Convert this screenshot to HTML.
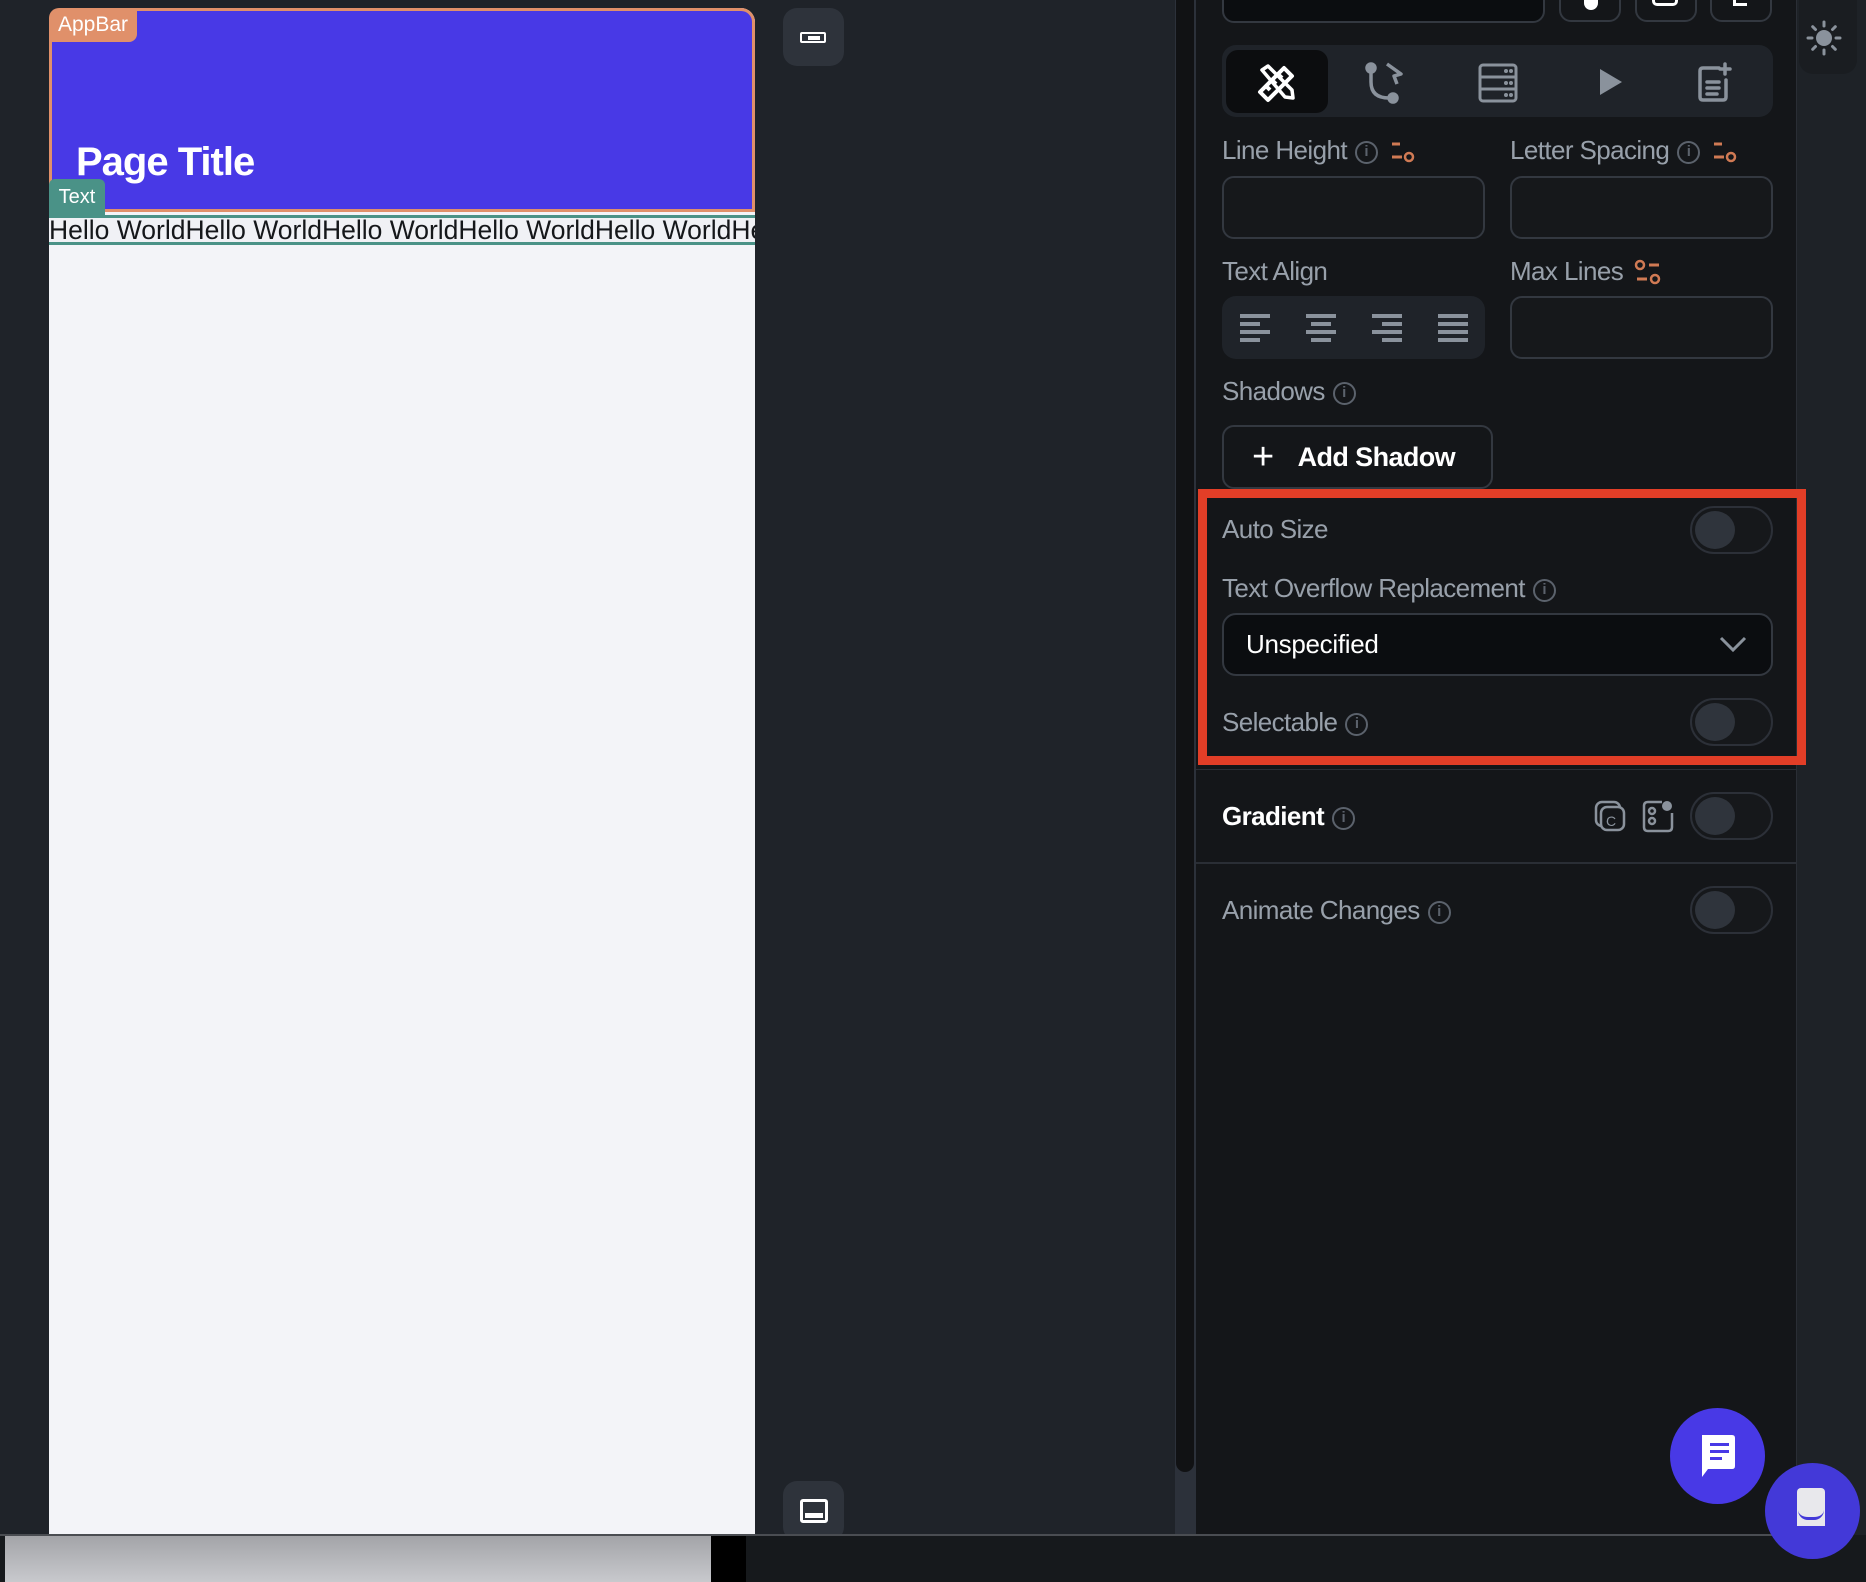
<!DOCTYPE html>
<html><head><meta charset="utf-8"><style>
*{box-sizing:border-box;margin:0;padding:0}
body{width:1866px;height:1582px;background:#1f2329;position:relative;overflow:hidden;font-family:"Liberation Sans",sans-serif}
.a{position:absolute}
.lbl{position:absolute;color:#98a0aa;font-size:26px;letter-spacing:-0.6px}
.inp{position:absolute;border:2px solid #333840;border-radius:12px;background:#16181b}
.tog{position:absolute;width:83px;height:48px;border:2px solid #2c3038;border-radius:24px;background:#16181b}
.tog:after{content:"";position:absolute;left:3px;top:3px;width:40px;height:38px;border-radius:50%;background:#2f343c}
.info{display:inline-block;width:23px;height:23px;border:2.5px solid #5b626c;border-radius:50%;color:#5b626c;font-size:15px;line-height:18px;text-align:center;font-weight:bold;vertical-align:middle;margin-left:8px;letter-spacing:0}
.sl{display:inline-block;vertical-align:middle;margin-left:10px}
</style></head><body>
<div class="a" style="left:49px;top:8px;width:706px;height:1527px;background:#f3f4f8;border-radius:14px 14px 0 0"></div>
<div class="a" style="left:49px;top:8px;width:706px;height:204px;background:#4839e6;border:3px solid #e0906a;border-radius:14px 14px 0 0"></div>
<div class="a" style="left:49px;top:8px;width:88px;height:34px;background:#e0906a;border-radius:10px 0 8px 0;color:#fff;font-size:21px;line-height:34px;text-align:center">AppBar</div>
<div class="a" style="left:76px;top:140px;color:#fff;font-size:40px;font-weight:bold;letter-spacing:-1px">Page Title</div>
<div class="a" style="left:49px;top:179px;width:56px;height:36px;background:#4a9287;border-radius:6px 6px 0 0;color:#fff;font-size:20px;line-height:36px;text-align:center">Text</div>
<div class="a" style="left:49px;top:215px;width:706px;height:30px;border-top:3px solid #4a9287;border-bottom:3px solid #4a9287;background:#f0f1f5;overflow:hidden;white-space:nowrap;color:#15171a;font-size:26.5px;line-height:24px">Hello WorldHello WorldHello WorldHello WorldHello WorldHello World</div>
<div class="a" style="left:783px;top:8px;width:61px;height:58px;background:#2e333b;border-radius:14px"></div>
<div class="a" style="left:800px;top:32px;width:26px;height:11px;border:2px solid #fff;border-radius:2px"><div class="a" style="left:6px;top:2px;width:12px;height:4px;background:#fff"></div></div>
<div class="a" style="left:783px;top:1481px;width:61px;height:60px;background:#2e333b;border-radius:14px"></div>
<div class="a" style="left:800px;top:1499px;width:28px;height:24px;border:3px solid #fff;border-radius:3px"><div class="a" style="left:2px;bottom:2px;width:18px;height:5px;background:#fff"></div></div>
<div class="a" style="left:1175px;top:0;width:21px;height:1535px;background:#2c313a"></div>
<div class="a" style="left:1176px;top:0;width:18px;height:1472px;background:#111214;border-radius:0 0 9px 9px"></div>
<div class="a" style="left:1196px;top:0;width:601px;height:1535px;background:#141619;border-right:1px solid #2a2e35;border-radius:0 0 14px 0"></div>
<div class="a" style="left:1797px;top:0;width:69px;height:1582px;background:#1e2227"></div>
<div class="a" style="left:1799px;top:0;width:58px;height:74px;background:#1a1d21;border-radius:0 0 14px 14px"></div>
<svg class="a" style="left:1806px;top:20px" width="36" height="36" viewBox="0 0 36 36"><circle cx="18" cy="18" r="8" fill="#8a929c"/><g stroke="#8a929c" stroke-width="3" stroke-linecap="round"><path d="M18 2v4M18 30v4M2 18h4M30 18h4M6.7 6.7l2.8 2.8M26.5 26.5l2.8 2.8M6.7 29.3l2.8-2.8M26.5 9.5l2.8-2.8"/></g></svg>
<div class="a" style="left:1222px;top:-20px;width:323px;height:43px;background:#0b0d10;border:2px solid #333840;border-radius:12px"></div>
<div class="a" style="left:1559px;top:-20px;width:62px;height:42px;border:2px solid #333840;border-radius:12px"></div>
<div class="a" style="left:1635px;top:-20px;width:62px;height:42px;border:2px solid #333840;border-radius:12px"></div>
<div class="a" style="left:1710px;top:-20px;width:62px;height:42px;border:2px solid #333840;border-radius:12px"></div>
<div class="a" style="left:1584px;top:-4px;width:14px;height:14px;background:#fff;border-radius:0 0 50% 50%"></div>
<div class="a" style="left:1652px;top:-6px;width:26px;height:12px;border:3px solid #fff;border-top:none;border-radius:0 0 5px 5px"></div>
<div class="a" style="left:1733px;top:-4px;width:14px;height:10px;border-left:3px solid #fff;border-bottom:3px solid #fff"></div>
<div class="a" style="left:1222px;top:45px;width:551px;height:72px;background:#1f2329;border-radius:14px"></div>
<div class="a" style="left:1226px;top:50px;width:102px;height:63px;background:#0c0d0f;border-radius:12px"></div>
<svg class="a" style="left:1256px;top:62px" width="42" height="42" viewBox="0 0 42 42" fill="none" stroke="#fff" stroke-width="4" stroke-linejoin="round"><path d="M4 30L28 6l8 8L12 38z M10 24l4 4M16 18l4 4M22 12l4 4"/><path d="M6 8l6-4 24 24 1 8-8-1z" stroke-width="3.5"/></svg>
<svg class="a" style="left:1365px;top:60px" width="44" height="46" viewBox="0 0 44 46" fill="none" stroke="#8a929c" stroke-width="3.5"><circle cx="6" cy="8" r="4" fill="#8a929c"/><circle cx="28" cy="38" r="4" fill="#8a929c"/><path d="M6 12v10q0 16 18 16"/><path d="M22 4l14 10-7 2 3 8" stroke-linejoin="round"/></svg>
<svg class="a" style="left:1478px;top:63px" width="40" height="40" viewBox="0 0 40 40" fill="none" stroke="#8a929c" stroke-width="3"><rect x="2" y="2" width="36" height="36" rx="3"/><path d="M2 14h36M2 26h36"/><g fill="#8a929c" stroke="none"><circle cx="28" cy="8" r="2"/><circle cx="33" cy="8" r="2"/><circle cx="28" cy="20" r="2"/><circle cx="33" cy="20" r="2"/><circle cx="28" cy="32" r="2"/><circle cx="33" cy="32" r="2"/></g></svg>
<svg class="a" style="left:1598px;top:67px" width="26" height="30" viewBox="0 0 26 30"><path d="M2 2l22 13L2 28z" fill="#8a929c"/></svg>
<svg class="a" style="left:1697px;top:62px" width="36" height="42" viewBox="0 0 36 42" fill="none" stroke="#8a929c" stroke-width="3.5" stroke-linecap="round"><path d="M22 6H6q-3 0-3 3v26q0 3 3 3h20q3 0 3-3V18"/><path d="M28 2v10M23 7h10M10 20h12M10 26h12M10 32h10"/></svg>
<div class="a" style="left:1196px;top:119px;width:601px;height:56px;overflow:hidden"><div class="lbl" style="left:26px;top:16px">Line Height<span class="info">i</span><svg class="sl" width="28" height="24" viewBox="0 0 28 24"><path d="M4 4h8M4 17h10" stroke="#d07a54" stroke-width="3"/><circle cx="21" cy="17" r="4" fill="none" stroke="#d07a54" stroke-width="2.5"/></svg></div><div class="lbl" style="left:314px;top:16px">Letter Spacing<span class="info">i</span><svg class="sl" width="28" height="24" viewBox="0 0 28 24"><path d="M4 4h8M4 17h10" stroke="#d07a54" stroke-width="3"/><circle cx="21" cy="17" r="4" fill="none" stroke="#d07a54" stroke-width="2.5"/></svg></div></div>
<div class="inp" style="left:1222px;top:176px;width:263px;height:63px"></div>
<div class="inp" style="left:1510px;top:176px;width:263px;height:63px"></div>
<div class="lbl" style="left:1222px;top:256px">Text Align</div>
<div class="lbl" style="left:1510px;top:256px">Max Lines<svg class="sl" width="30" height="28" viewBox="0 0 30 28"><circle cx="7" cy="6" r="4" fill="none" stroke="#d07a54" stroke-width="2.5"/><path d="M16 6h10M4 20h10" stroke="#d07a54" stroke-width="3"/><circle cx="22" cy="20" r="4" fill="none" stroke="#d07a54" stroke-width="2.5"/></svg></div>
<div class="a" style="left:1222px;top:296px;width:263px;height:63px;background:#1f2329;border-radius:14px"></div>
<svg class="a" style="left:1238px;top:312px" width="236" height="34" viewBox="0 0 236 34" fill="#8a929c"><g><rect x="2" y="2" width="30" height="4"/><rect x="2" y="10" width="20" height="4"/><rect x="2" y="18" width="30" height="4"/><rect x="2" y="26" width="20" height="4"/></g><g transform="translate(66 0)"><rect x="2" y="2" width="30" height="4"/><rect x="7" y="10" width="20" height="4"/><rect x="2" y="18" width="30" height="4"/><rect x="7" y="26" width="20" height="4"/></g><g transform="translate(132 0)"><rect x="2" y="2" width="30" height="4"/><rect x="12" y="10" width="20" height="4"/><rect x="2" y="18" width="30" height="4"/><rect x="12" y="26" width="20" height="4"/></g><g transform="translate(198 0)"><rect x="2" y="2" width="30" height="4"/><rect x="2" y="10" width="30" height="4"/><rect x="2" y="18" width="30" height="4"/><rect x="2" y="26" width="30" height="4"/></g></svg>
<div class="inp" style="left:1510px;top:296px;width:263px;height:63px"></div>
<div class="lbl" style="left:1222px;top:376px">Shadows<span class="info">i</span></div>
<div class="a" style="left:1222px;top:425px;width:271px;height:64px;border:2px solid #333840;border-radius:12px;color:#fff;font-size:27px;font-weight:bold;line-height:60px;padding-left:28px;letter-spacing:-0.6px;white-space:nowrap"><span style="font-weight:normal;font-size:38px;vertical-align:-3px;margin-right:24px">+</span>Add Shadow</div>
<div class="a" style="left:1198px;top:489px;width:608px;height:276px;border:9px solid #e23e27"></div>
<div class="lbl" style="left:1222px;top:514px">Auto Size</div>
<div class="tog" style="left:1690px;top:506px"></div>
<div class="lbl" style="left:1222px;top:573px">Text Overflow Replacement<span class="info">i</span></div>
<div class="a" style="left:1222px;top:613px;width:551px;height:63px;background:#0b0d10;border:2px solid #333840;border-radius:14px;color:#fff;font-size:26px;line-height:59px;padding-left:22px;letter-spacing:-0.3px">Unspecified</div>
<svg class="a" style="left:1718px;top:634px" width="30" height="20" viewBox="0 0 30 20"><path d="M3 4l12 12L27 4" fill="none" stroke="#8a929c" stroke-width="3"/></svg>
<div class="lbl" style="left:1222px;top:707px">Selectable<span class="info">i</span></div>
<div class="tog" style="left:1690px;top:698px"></div>
<div class="a" style="left:1196px;top:769px;width:600px;height:1px;background:#2a2e35"></div>
<div class="lbl" style="left:1222px;top:801px;color:#fff;font-weight:bold">Gradient<span class="info">i</span></div>
<svg class="a" style="left:1594px;top:800px" width="32" height="32" viewBox="0 0 32 32" fill="none" stroke="#8a929c" stroke-width="2.5"><rect x="2" y="2" width="24" height="24" rx="6"/><rect x="7" y="7" width="23" height="23" rx="6" fill="#141619"/><text x="12" y="26" font-size="14" fill="#8a929c" stroke="none" font-family="Liberation Sans">C</text></svg>
<svg class="a" style="left:1642px;top:799px" width="32" height="34" viewBox="0 0 32 34" fill="none" stroke="#8a929c" stroke-width="2.5"><path d="M20 3H6q-4 0-4 4v21q0 4 4 4h20q4 0 4-4V14"/><circle cx="10" cy="12" r="3"/><circle cx="10" cy="22" r="3"/><circle cx="25" cy="7" r="5" fill="#8a929c" stroke="none"/></svg>
<div class="tog" style="left:1690px;top:792px"></div>
<div class="a" style="left:1196px;top:862px;width:600px;height:2px;background:#2a2e35"></div>
<div class="lbl" style="left:1222px;top:895px">Animate Changes<span class="info">i</span></div>
<div class="tog" style="left:1690px;top:886px"></div>
<div class="a" style="left:0;top:1535px;width:1866px;height:47px;background:#16191c"></div>
<div class="a" style="left:5px;top:1536px;width:706px;height:46px;background:linear-gradient(#a3a4a8,#c8c9cd)"></div>
<div class="a" style="left:711px;top:1536px;width:35px;height:46px;background:#000"></div>
<div class="a" style="left:0;top:1534px;width:1797px;height:2px;background:#4a4d52"></div>
<div class="a" style="left:1765px;top:1463px;width:95px;height:96px;border-radius:50%;background:#4339d8"></div>
<div class="a" style="left:1797px;top:1488px;width:28px;height:38px;background:#e8e8ec;border-radius:4px 4px 0 0"></div>
<div class="a" style="left:1798px;top:1510px;width:26px;height:10px;border-bottom:3px solid #4339d8;border-radius:0 0 13px 13px"></div>
<div class="a" style="left:1670px;top:1408px;width:95px;height:96px;border-radius:50%;background:#4839e6"></div>
<svg class="a" style="left:1698px;top:1433px" width="40" height="44" viewBox="0 0 40 44"><path d="M4 2h30q3 0 3 3v28q0 3-3 3H10l-6 8z" fill="#fff"/><g fill="#4839e6"><rect x="12" y="10" width="19" height="3"/><rect x="12" y="17" width="19" height="3"/><rect x="12" y="24" width="12" height="3"/></g></svg>
</body></html>
